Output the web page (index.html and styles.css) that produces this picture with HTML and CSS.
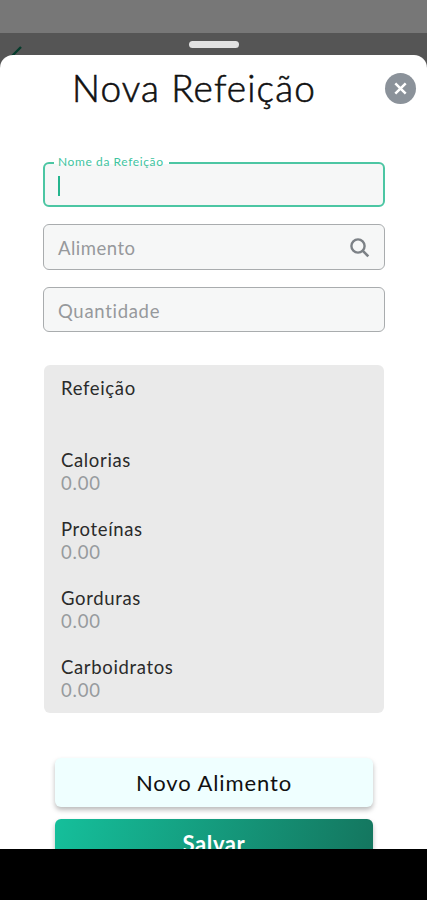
FILE: index.html
```html
<!DOCTYPE html>
<html lang="pt-BR">
<head>
<meta charset="utf-8">
<meta name="viewport" content="width=device-width, initial-scale=1">
<title>Nova Refeição</title>
<link rel="stylesheet" href="styles.css">
</head>
<body>
<div class="screen">
  <div class="status"></div>
  <div class="backdrop">
    <div class="handle"></div>
    <svg class="back" width="26" height="20" viewBox="0 0 26 20"><path d="M21 1 L9 13" stroke="#053c2c" stroke-width="2.4" fill="none"/></svg>
  </div>
  <main class="sheet">
    <header class="header">
      <h1 class="title">Nova Refeição</h1>
      <button class="close" aria-label="Fechar"><svg width="31" height="31" viewBox="0 0 31 31"><path d="M10.3 10.3 L20.7 20.7 M20.7 10.3 L10.3 20.7" stroke="#fff" stroke-width="2.5" fill="none"/></svg></button>
    </header>
    <form class="form">
      <div class="field active"><span class="label">Nome da Refeição</span><span class="caret"></span></div>
      <div class="field"><span class="hint food">Alimento</span><svg class="search" width="20" height="20" viewBox="0 0 20 20"><circle cx="8" cy="8" r="6.6" stroke="#7c8186" stroke-width="2.4" fill="none"/><path d="M12.6 12.6 L18.3 18.3" stroke="#7c8186" stroke-width="2.6" fill="none"/></svg></div>
      <div class="field"><span class="hint amount">Quantidade</span></div>
    </form>
    <section class="card">
      <h2 class="name meal">Refeição</h2>
      <div class="item"><div class="name calories">Calorias</div><div class="value">0.00</div></div>
      <div class="item"><div class="name proteins">Proteínas</div><div class="value">0.00</div></div>
      <div class="item"><div class="name fats">Gorduras</div><div class="value">0.00</div></div>
      <div class="item"><div class="name carbs">Carboidratos</div><div class="value">0.00</div></div>
    </section>
    <div class="actions">
      <button class="btn secondary"><span>Novo Alimento</span></button>
      <button class="btn primary"><span>Salvar</span></button>
    </div>
  </main>
  <footer class="navbar"></footer>
</div>
</body>
</html>
```
FILE: styles.css
```css
* { box-sizing: border-box; }
body { margin: 0; background: #000; font-family: Lato, "Open Sans", sans-serif; }
button { border: 0; padding: 0; font: inherit; }
h1, h2 { margin: 0; font-weight: 400; }
.screen { display: flex; flex-direction: column; width: 427px; height: 900px; overflow: hidden; background: #555; }
.status { flex: none; height: 33px; background: #777; }
.backdrop { position: relative; flex: none; height: 22px; display: flex; justify-content: center; padding-top: 8px; }
.handle { width: 50px; height: 7px; border-radius: 4px; background: #e2e2e2; }
.back { position: absolute; left: 0; top: 13px; }
.sheet { position: relative; flex: none; height: 794px; overflow: hidden; background: #fff; border-radius: 13px 13px 0 0; }
.header { display: flex; justify-content: flex-end; align-items: flex-start; height: 107px; padding: 17px 11px 0 72px; }
.title { flex: 1; font-size: 37px; font-weight: 300; -webkit-text-stroke: 0.6px #111; line-height: 31px; letter-spacing: 1.1px; color: #111; white-space: nowrap; }
.close { flex: none; width: 31px; height: 31px; margin-top: 1px; border-radius: 50%; background: #8b929a; }
.close svg { display: block; }
.form { display: flex; flex-direction: column; gap: 17px; margin: 0 42px 0 43px; }
.field { position: relative; display: flex; align-items: center; justify-content: space-between; height: 46px; padding: 2px 14px 0 14px; border: 1px solid #a9acae; border-radius: 6px; background: #f6f7f7; }
.field:first-child, .field:last-child { height: 45px; }
.field.active { border: 2px solid #4cc6a3; padding-left: 13px; }
.label { position: absolute; left: 9px; top: -9px; padding: 0 5px 0 4px; font-size: 12px; line-height: 14px; letter-spacing: 0.6px; color: #3fc49f; background: linear-gradient(#fff 9px, #f6f7f7 9px); white-space: nowrap; }
.caret { width: 2px; height: 20px; background: #25b58e; }
.hint { font-size: 18.5px; color: #96999c; letter-spacing: 0.5px; }
.amount { letter-spacing: 0.7px; }
.search { flex: none; }
.card { margin: 33px 43px 0 44px; height: 348px; padding: 12px 17px; border-radius: 6px; background: #eaeaea; }
.name { font-size: 18.5px; line-height: 22px; letter-spacing: 0.65px; color: #2b2b2b; }
.meal { margin-bottom: 50px; }
.item { height: 69px; }
.value { font-size: 18.5px; line-height: 25px; letter-spacing: 0.8px; color: #979b9e; }
.actions { display: flex; flex-direction: column; gap: 12px; margin: 45px 54px 0 55px; }
.btn { flex: none; height: 49px; padding-bottom: 1px; border-radius: 6px; font-size: 22px; letter-spacing: 0.9px; box-shadow: 0 3px 5px #0004; }
.secondary { background: #efffff; color: #111; }
.primary { background: linear-gradient(105deg, #15bf9b, #14755e); color: #fff; font-weight: 700; letter-spacing: 0.6px; }
.navbar { flex: 1; background: #000; }
```
